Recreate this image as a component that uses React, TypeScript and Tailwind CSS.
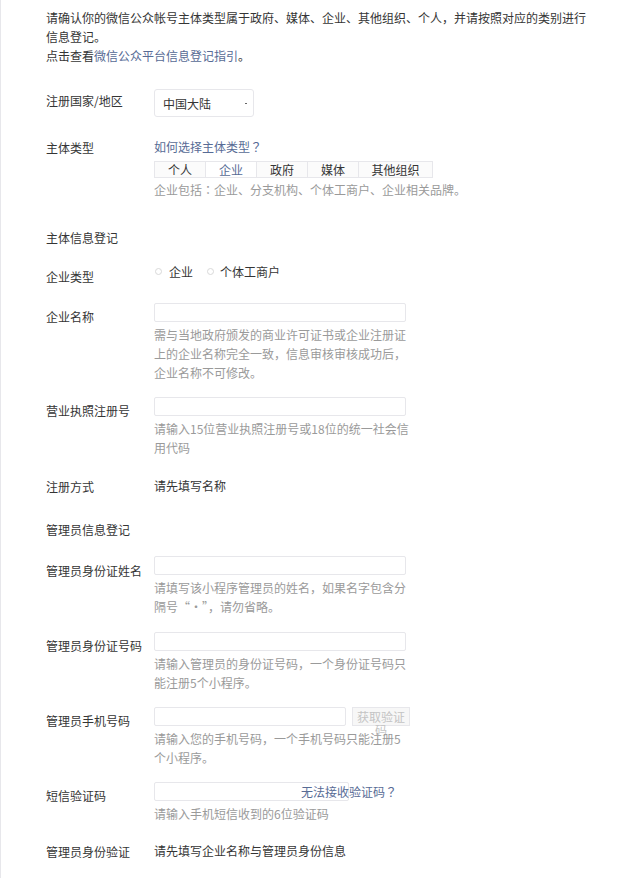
import React from "react";

const font = { fontFamily: '"Noto Sans CJK SC", "Noto Sans", sans-serif' };

function T({ s }: { s: string }) {
  const parts = s.split(/([：？])/);
  return (
    <>
      {parts.map((p, i) =>
        /^[：？]$/.test(p) ? (
          <span key={i} style={{ fontFamily: '"Noto Sans CJK TC", sans-serif' }}>
            {p}
          </span>
        ) : (
          <React.Fragment key={i}>{p}</React.Fragment>
        )
      )}
    </>
  );
}

function Label({ children, pt = "pt-[4px]" }: { children: React.ReactNode; pt?: string }) {
  return <div className={`w-[108px] shrink-0 ${pt} text-[#353535]`}>{children}</div>;
}

function Help({ s, w = "w-[252px]" }: { s: string; w?: string }) {
  return (
    <div className={`mt-[3px] ${w} text-[#9a9a9a]`}>
      <T s={s} />
    </div>
  );
}

function Input({ w = "w-[252px]" }: { w?: string }) {
  return <div className={`${w} h-[19px] border border-[#e7e7eb] rounded-[2px] bg-white`} />;
}

export default function App() {
  return (
    <div
      className="min-h-screen w-[639px] bg-white border-l border-[#e7e7eb] text-[12px] leading-[19px] text-[#353535]"
      style={font}
    >
      <div className="pl-[45px] pt-[8px] pb-[20px] flex flex-col">
        <div className="w-[548px]">
          <p>请确认你的微信公众帐号主体类型属于政府、媒体、企业、其他组织、个人，并请按照对应的类别进行信息登记。</p>
          <p>
            点击查看<span className="text-[#576b95]">微信公众平台信息登记指引</span>。
          </p>
        </div>

        {/* country */}
        <div className="mt-[24px] flex">
          <Label pt="pt-[2px]">注册国家/地区</Label>
          <div className="w-[100px] h-[28px] border border-[#e7e7eb] rounded-[3px] flex items-center justify-between pl-[8px] pr-[6px] pt-[1px]">
            <span>中国大陆</span>
            <span className="block w-[2px] h-[1px] bg-[#666]" />
          </div>
        </div>

        {/* subject type */}
        <div className="mt-[20px] flex">
          <Label pt="pt-[1px]">主体类型</Label>
          <div className="flex flex-col">
            <span className="text-[#576b95]">
              <T s="如何选择主体类型？" />
            </span>
            <div className="mt-[5px] flex h-[17px] border border-[#e7e7eb] leading-[15px] w-[279px]">
              <div className="w-[51px] text-center border-r border-[#e7e7eb] bg-[#fbfbfb]">个人</div>
              <div className="w-[51px] text-center border-r border-[#e7e7eb] text-[#576b95] bg-white">企业</div>
              <div className="w-[51px] text-center border-r border-[#e7e7eb] bg-[#fbfbfb]">政府</div>
              <div className="w-[51px] text-center border-r border-[#e7e7eb] bg-[#fbfbfb]">媒体</div>
              <div className="flex-1 text-center bg-[#fbfbfb]">其他组织</div>
            </div>
            <div className="mt-[2px] text-[#9a9a9a]">
              <T s="企业包括：企业、分支机构、个体工商户、企业相关品牌。" />
            </div>
          </div>
        </div>

        <div className="mt-[29px]">主体信息登记</div>

        {/* enterprise type */}
        <div className="mt-[15px] flex">
          <Label pt="pt-[5px]">企业类型</Label>
          <div className="flex items-center h-[19px]">
            <span className="w-[7px] h-[7px] rounded-full border border-[#d9d9d9] ml-[1px]" />
            <span className="ml-[7px]">企业</span>
            <span className="w-[7px] h-[7px] rounded-full border border-[#d9d9d9] ml-[14px]" />
            <span className="ml-[6px]">个体工商户</span>
          </div>
        </div>

        {/* enterprise name */}
        <div className="mt-[17px] flex">
          <Label>企业名称</Label>
          <div className="flex flex-col">
            <Input />
            <Help s="需与当地政府颁发的商业许可证书或企业注册证上的企业名称完全一致，信息审核审核成功后，企业名称不可修改。" />
          </div>
        </div>

        {/* license */}
        <div className="mt-[15px] flex">
          <Label>营业执照注册号</Label>
          <div className="flex flex-col">
            <Input />
            <Help w="w-[258px]" s="请输入15位营业执照注册号或18位的统一社会信用代码" />
          </div>
        </div>

        <div className="mt-[19px] flex">
          <Label pt="pt-[1px]">注册方式</Label>
          <div>请先填写名称</div>
        </div>

        <div className="mt-[24px]">管理员信息登记</div>

        <div className="mt-[17px] flex">
          <Label pt="pt-[5px]">管理员身份证姓名</Label>
          <div className="flex flex-col">
            <Input />
            <Help s="请填写该小程序管理员的姓名，如果名字包含分隔号“·”，请勿省略。" />
          </div>
        </div>

        <div className="mt-[16px] flex">
          <Label>管理员身份证号码</Label>
          <div className="flex flex-col">
            <Input />
            <Help s="请输入管理员的身份证号码，一个身份证号码只能注册5个小程序。" />
          </div>
        </div>

        <div className="mt-[15px] flex">
          <Label>管理员手机号码</Label>
          <div className="flex flex-col">
            <div className="flex">
              <Input w="w-[192px]" />
              <div className="ml-[6px] w-[58px] h-[19px] border border-[#e7e7eb] bg-[#f7f7f7] text-[#c4c4c4] text-center leading-[13px] pt-[2px] overflow-visible">
                获取验证码
              </div>
            </div>
            <Help s="请输入您的手机号码，一个手机号码只能注册5个小程序。" />
          </div>
        </div>

        <div className="mt-[15px] flex">
          <Label>短信验证码</Label>
          <div className="flex flex-col">
            <div className="relative">
              <Input w="w-[195px]" />
              <span className="absolute left-[147px] top-0 whitespace-nowrap text-[#576b95]">
                <T s="无法接收验证码？" />
              </span>
            </div>
            <Help s="请输入手机短信收到的6位验证码" />
          </div>
        </div>

        <div className="mt-[18px] flex">
          <Label pt="pt-[1px]">管理员身份验证</Label>
          <div>请先填写企业名称与管理员身份信息</div>
        </div>
      </div>
    </div>
  );
}
